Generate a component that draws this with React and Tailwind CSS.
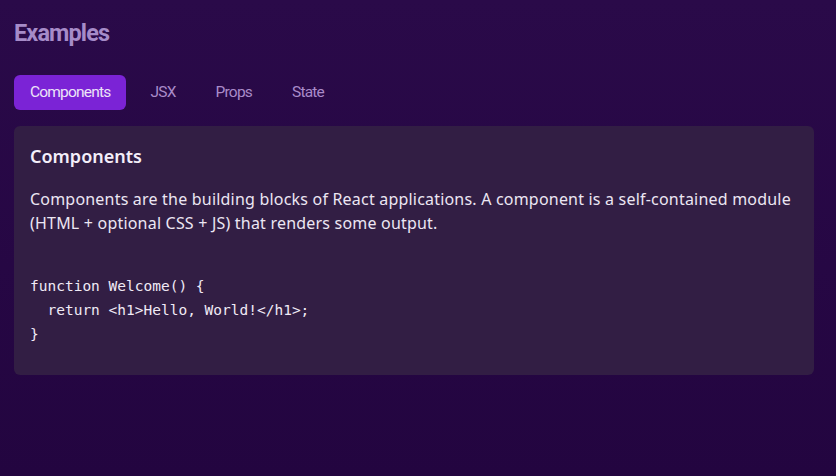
import { useState } from 'react'

const tabs = ['Components', 'JSX', 'Props', 'State']

function App() {
  const [active, setActive] = useState('Components')

  return (
    <div className="min-h-[476px] bg-gradient-to-b from-[#2a0a49] to-[#230540] px-[14px] pt-[18px]" style={{ fontFamily: 'Roboto, sans-serif' }}>
      <h1 className="text-[23.5px] leading-[30px] font-bold text-[#a68bc8] tracking-[-0.9px]">Examples</h1>

      <div className="flex gap-2 mt-[27px] mb-4">
        {tabs.map((tab) => (
          <button
            key={tab}
            onClick={() => setActive(tab)}
            className={
              tab === active
                ? 'h-[35px] px-4 rounded-md bg-[#7b23d6] text-[#ece3f8] text-[15.5px] tracking-[-0.8px]'
                : 'h-[35px] px-4 rounded-md text-[#a98bc9] text-[15.5px] tracking-[-0.8px]'
            }
          >
            {tab}
          </button>
        ))}
      </div>

      {/* Tab content */}
      <div className="w-[800px] bg-[#321e44] rounded-md px-4 pt-[18px] pb-[29px]" style={{ fontFamily: '"Noto Sans", sans-serif' }}>
        <h2 className="text-[18px] leading-[24px] font-semibold text-[#f4eefa]">Components</h2>
        <p className="mt-[19px] text-[16px] leading-[24px] text-[#ece6f3] tracking-[0.2px]">
          Components are the building blocks of React applications. A component is a self-contained module
          <br />
          (HTML + optional CSS + JS) that renders some output.
        </p>
        <pre className="mt-[39px] text-[14.5px] leading-[24px] text-[#f0eaf6]" style={{ fontFamily: '"DejaVu Sans Mono", monospace' }}>
{`function Welcome() {
  return <h1>Hello, World!</h1>;
}`}
        </pre>
      </div>
    </div>
  )
}

export default App
